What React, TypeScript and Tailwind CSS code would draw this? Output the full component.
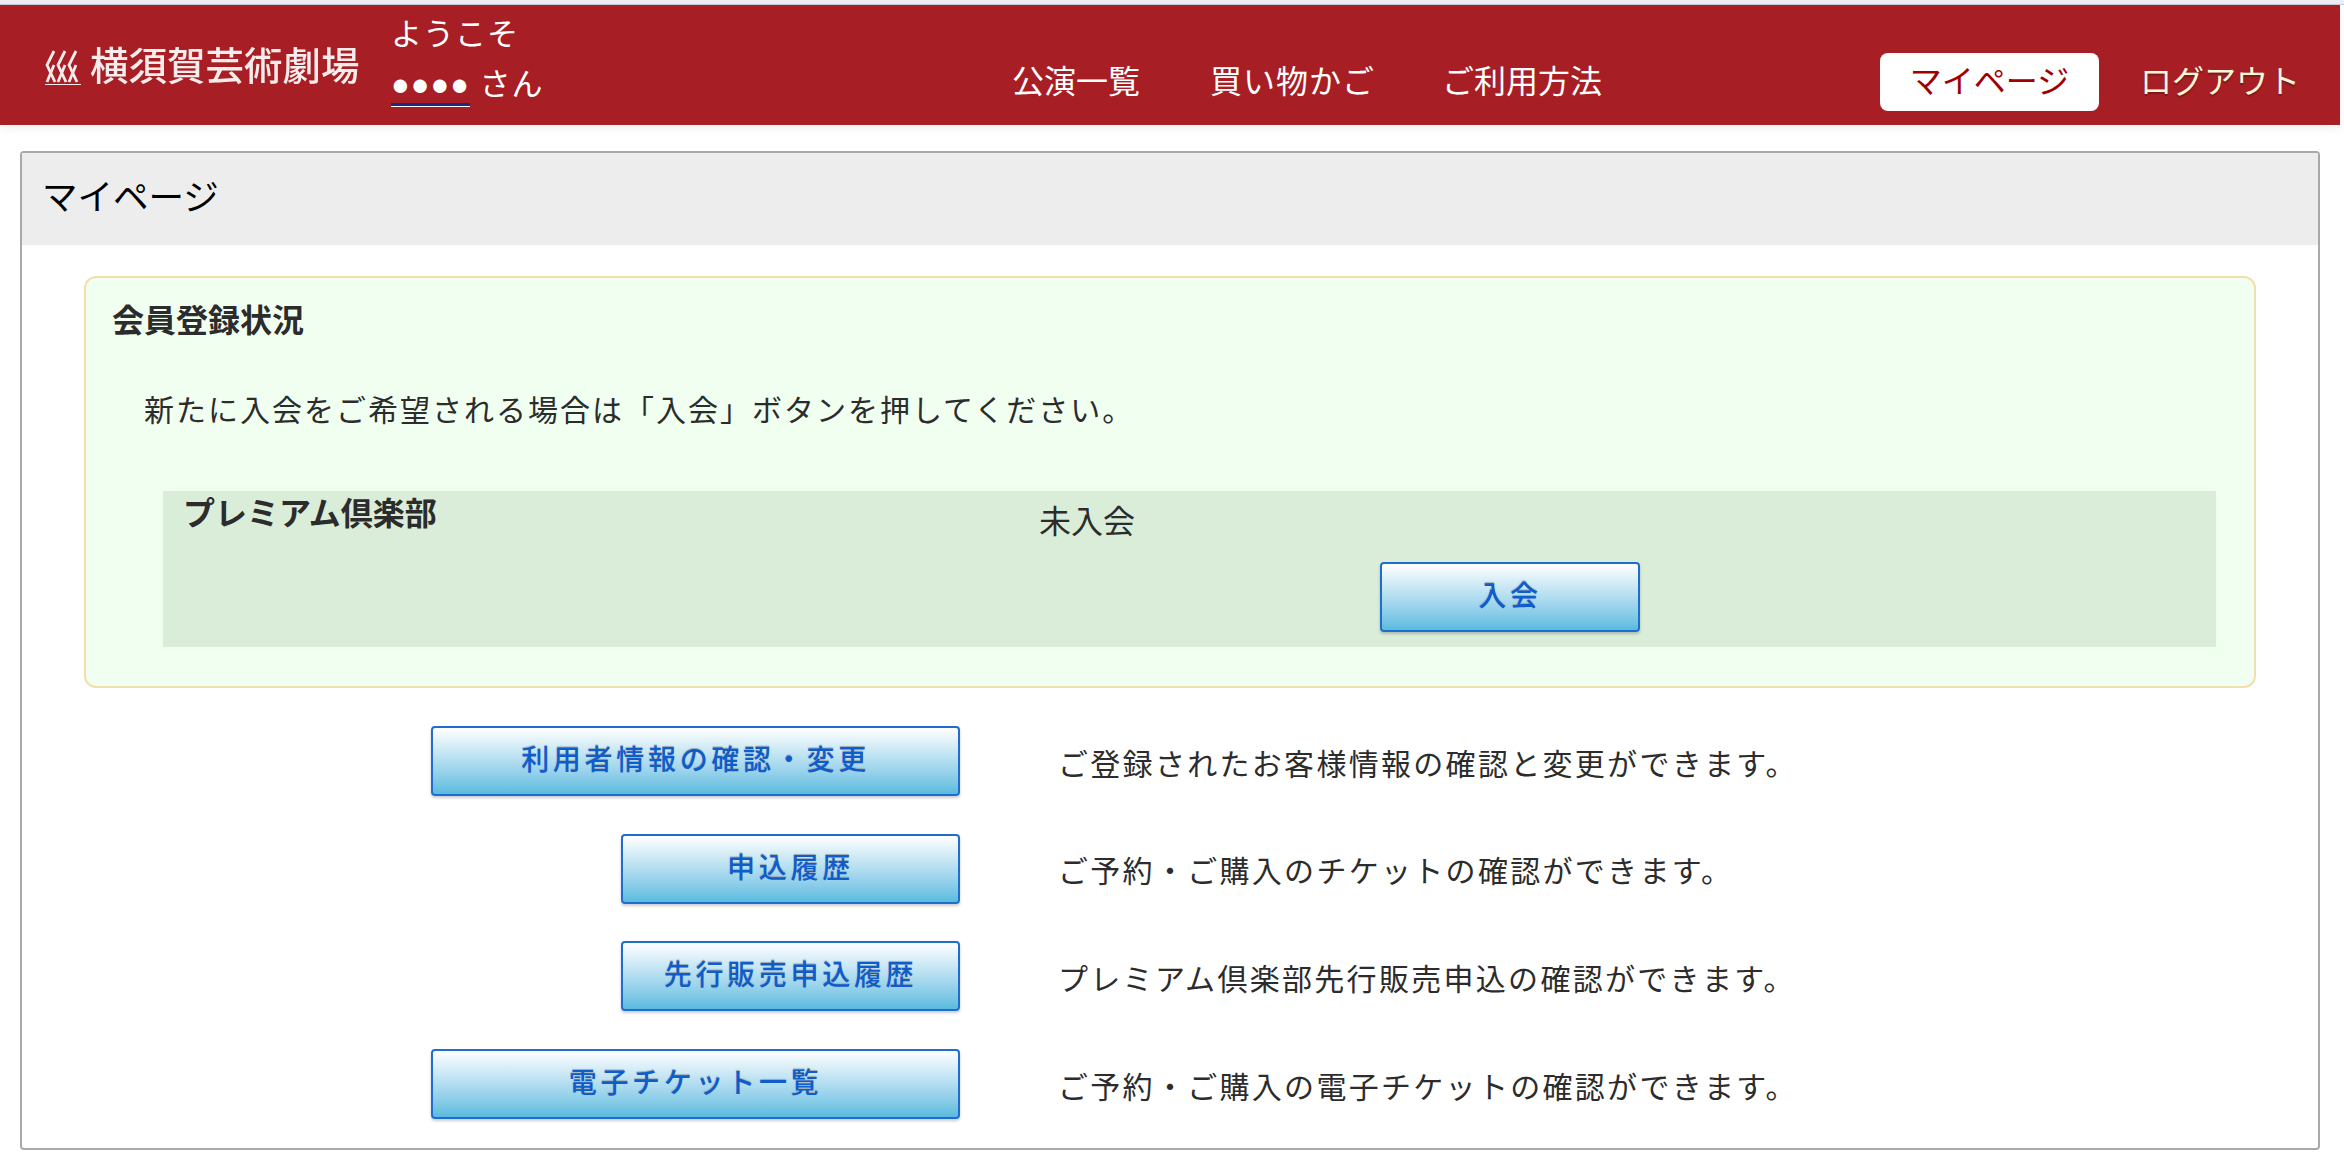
const jp = 'font-["Helvetica_Neue","Liberation_Sans","Noto_Sans_CJK_JP",sans-serif]'

const rows = [
  { label: '利用者情報の確認・変更', wide: true, text: 'ご登録されたお客様情報の確認と変更ができます。' },
  { label: '申込履歴', wide: false, text: 'ご予約・ご購入のチケットの確認ができます。' },
  { label: '先行販売申込履歴', wide: false, text: 'プレミアム倶楽部先行販売申込の確認ができます。' },
  { label: '電子チケット一覧', wide: true, text: 'ご予約・ご購入の電子チケットの確認ができます。' },
]

function BlueButton({ label, className }: { label: string; className: string }) {
  return (
    <button
      className={`h-[70px] border-2 border-[#1f6dd1] rounded-[4px] bg-gradient-to-b from-white to-[#5abbdf] text-[#0f5ccb] text-[28px] font-medium tracking-[3.7px] [text-shadow:0_-1px_1px_#9aa9b5] shadow-[0_2px_3px_rgba(0,0,0,0.2)] ${className}`}
    >
      {label}
    </button>
  )
}

export default function App() {
  return (
    <div className={`w-[2344px] h-[1164px] bg-white overflow-hidden ${jp}`}>
      <div className="h-[5px] bg-[#eceef3] border-b border-[#c9ccd4]" />

      {/* Header */}
      <header className="w-[2340px] h-[120px] bg-[#a71e25] flex items-center shadow-[0_4px_10px_rgba(0,0,0,0.06)]">
        <div className="w-[391px] pl-[45px] flex items-center gap-[9px] mt-[5px]">
          <svg width="36" height="36" viewBox="0 0 36 36" fill="none" stroke="#f7ecec" strokeWidth="2.8" className="blur-[0.5px]">
            <path d="M9 1L2 15l8 17M20 1l-7 14 8 17M31 1l-7 14 8 17" />
            <path d="M9 15L2 32M20 15l-7 17M31 15l-7 17" />
            <path d="M0 34.5h36" strokeWidth="1.2" />
          </svg>
          <span className="text-[#f7ecec] text-[38.5px] leading-none font-medium blur-[0.6px] whitespace-nowrap">横須賀芸術劇場</span>
        </div>

        <div className="w-[621px] text-white text-[31px] leading-[50px] tracking-[1px] -mt-[10px]">
          <p>ようこそ</p>
          <p>
            <span className="inline-block leading-[37px] border-b-[3px] border-[#1a2a80] shadow-[0_1px_0_white]">●●●●</span> さん
          </p>
        </div>

        <nav className="flex items-center text-white text-[32px] whitespace-nowrap mt-[2px] pt-[32px]">
          <span className="w-[198px]">公演一覧</span>
          <span className="w-[232px] tracking-[1px]">買い物かご</span>
          <span className="w-[438px]">ご利用方法</span>
          <span className="w-[219px] h-[58px] bg-white rounded-[8px] text-[#a00000] flex items-center justify-center">マイページ</span>
          <span className="ml-[41px] text-[#fdf6d8] [text-shadow:0_2px_1px_#7a1a1a]">ログアウト</span>
        </nav>
      </header>

      {/* Panel */}
      <main className="ml-[20px] mt-[26px] w-[2300px] h-[999px] border-2 border-[#a9a9a9] rounded-[4px]">
        <h1 className="h-[92px] bg-[#ededed] pl-[20px] flex items-center text-black text-[35.5px] font-normal">マイページ</h1>

        <section className="mt-[31px] ml-[62px] w-[2172px] h-[412px] border-2 border-[#f3dfae] rounded-[12px] bg-[#f1fff0] text-[#2c2c2c] pt-[21px]">
          <h2 className="pl-[26px] text-[32px] font-bold leading-[44px]">会員登録状況</h2>
          <p className="mt-[46px] pl-[58px] text-[30px] tracking-[2px] leading-[44px]">新たに入会をご希望される場合は「入会」ボタンを押してください。</p>

          <div className="mt-[58px] ml-[77px] w-[2053px] h-[156px] bg-[#d9edd9] relative flex">
            <div className="w-[876px] pl-[20px] text-[32px] font-bold leading-[44px] pt-[1px]">プレミアム倶楽部</div>
            <div className="flex-1 pt-[9px]">
              <p className="text-[32px] leading-[44px]">未入会</p>
              <BlueButton label="入会" className="w-[260px] ml-[341px] mt-[18px]" />
            </div>
          </div>
        </section>

        <div className="mt-[38px] flex flex-col gap-[37.7px]">
          {rows.map((row) => (
            <div key={row.label} className="flex items-center h-[70px]">
              <div className="w-[938px] flex justify-end">
                <BlueButton label={row.label} className={row.wide ? 'w-[529px]' : 'w-[339px]'} />
              </div>
              <p className="ml-[98px] mt-[6px] text-[#2c2c2c] text-[30px] tracking-[2.3px]">{row.text}</p>
            </div>
          ))}
        </div>
      </main>
    </div>
  )
}
